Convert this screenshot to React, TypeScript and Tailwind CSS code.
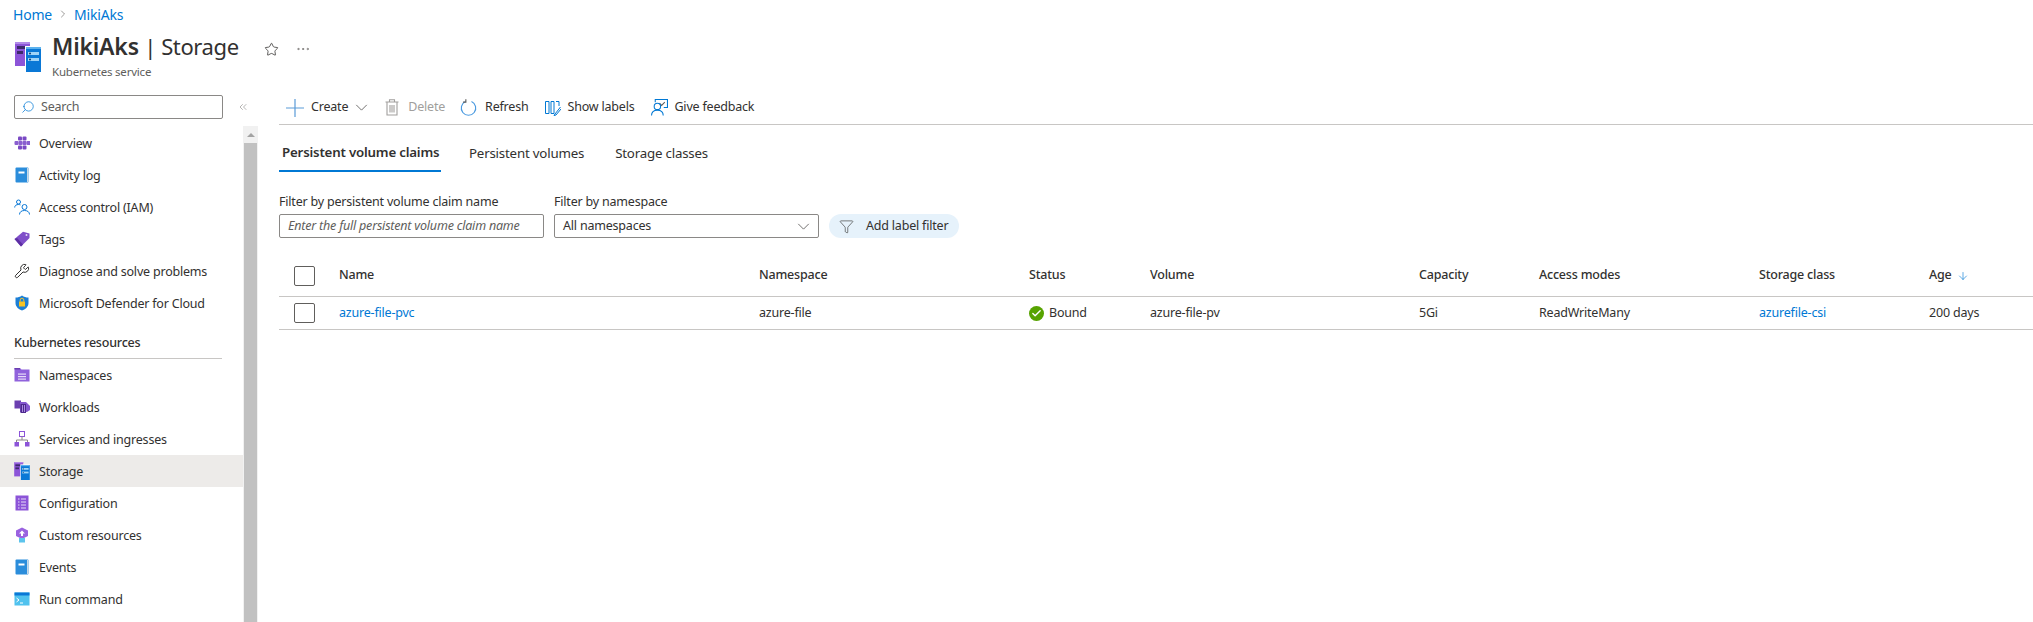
import { Search, Star, ChevronRight, ChevronsLeft, Filter, Ellipsis, ArrowDown, Wrench, Check } from 'lucide-react';

function ClusterIcon({ className }: { className: string }) {
  return (
    <svg viewBox="0 0 26 30" className={className} aria-hidden="true">
      <rect x="0" y="0" width="15" height="24" fill="#8c54d8" />
      <rect x="0" y="0" width="15" height="2" fill="#b28ae8" />
      <rect x="2" y="4" width="9" height="3" fill="#3d2a6b" />
      <rect x="2" y="9" width="6" height="3" fill="#3d2a6b" />
      <rect x="10" y="4" width="16" height="26" fill="#ffffff" />
      <rect x="11" y="5" width="15" height="25" fill="#0a78d6" />
      <rect x="11" y="5" width="15" height="2" fill="#5cb2ee" />
      <rect x="13" y="10" width="11" height="3" fill="#9fd4f7" />
      <rect x="13" y="16" width="11" height="3" fill="#9fd4f7" />
      <circle cx="15" cy="11.5" r="1" fill="#0f3d73" />
      <circle cx="15" cy="17.5" r="1" fill="#0f3d73" />
    </svg>
  );
}

function OverviewIcon() {
  return (
    <svg viewBox="0 0 16 16" className="w-4 h-4" aria-hidden="true">
      {[[4, 1.500], [8.500, 1.500], [0.500, 6], [4.500, 6], [8.500, 6], [12.500, 6], [4, 10.500], [8.500, 10.500]].map(([x, y]) => (
        <rect key={`${x}-${y}`} x={x} y={y} width="4" height="4" rx="1" fill={y === 6 ? '#8a5ecf' : '#7a49c4'} />
      ))}
    </svg>
  );
}

function BookIcon() {
  return (
    <svg viewBox="0 0 16 16" className="w-4 h-4" aria-hidden="true">
      <rect x="1.500" y="0.500" width="13" height="15" rx="1" fill="#2b8ddb" />
      <rect x="13" y="1" width="1.500" height="14" fill="#c8d8e6" />
      <rect x="4.500" y="4.500" width="6" height="2" fill="#ffffff" />
    </svg>
  );
}

function PeopleIcon() {
  return (
    <svg viewBox="0 0 16 16" className="w-4 h-4" fill="none" stroke="#0a78d6" strokeWidth="1" aria-hidden="true">
      <circle cx="4.500" cy="3" r="2" />
      <path d="M0.700 8.500c0-2 1.600-3 3.800-3 0.800 0 1.500 0.200 2 0.400" />
      <circle cx="10.500" cy="8" r="2.500" />
      <path d="M5.500 15.500c0-2.500 2-4 5-4s5 1.500 5 4" />
    </svg>
  );
}

function TagIcon() {
  return (
    <svg viewBox="0 0 16 16" className="w-4 h-4" aria-hidden="true">
      <path d="M0.500 8 L9 0.800 L15.500 2.500 L15.500 7 L7 15.500 Z" fill="#7f4fc9" />
      <path d="M0.500 8 L7 15.500 L9 13.500 L3 7 Z" fill="#5d2fa3" />
      <circle cx="12.500" cy="4" r="1" fill="#e6dcf7" />
    </svg>
  );
}

function ShieldIcon() {
  return (
    <svg viewBox="0 0 16 16" className="w-4 h-4" aria-hidden="true">
      <path d="M8 0.500 C10 2 12 2.500 14.500 2.500 L14.500 8 C14.500 12 11 14.500 8 15.500 C5 14.500 1.500 12 1.500 8 L1.500 2.500 C4 2.500 6 2 8 0.500 Z" fill="#1c7fd6" />
      <rect x="5" y="6.500" width="6" height="5" fill="#f7c325" />
      <path d="M6.200 6.500 V5 a1.800 1.800 0 0 1 3.600 0 V6.500" fill="none" stroke="#f7c325" strokeWidth="1" />
    </svg>
  );
}

function FolderIcon() {
  return (
    <svg viewBox="0 0 16 16" className="w-4 h-4" aria-hidden="true">
      <path d="M0.500 1 H6 L7.500 2.500 H15.500 V14.500 H0.500 Z" fill="#9062dc" />
      <rect x="0.500" y="1" width="5.500" height="1.500" fill="#6b3fb0" />
      <rect x="4" y="6.500" width="8" height="1.200" fill="#e6dcf7" />
      <rect x="4" y="9" width="8" height="1.200" fill="#e6dcf7" />
      <rect x="4" y="11.500" width="8" height="1.200" fill="#e6dcf7" />
    </svg>
  );
}

function WorkloadsIcon() {
  return (
    <svg viewBox="0 0 16 16" className="w-4 h-4" aria-hidden="true">
      <rect x="0.500" y="1.500" width="6.500" height="8" fill="#6b3fb0" />
      <path d="M6 3 H12 L16 7 V11 L13 13 H6 Z" fill="#8457cf" />
      <rect x="6.500" y="5" width="5.500" height="9" fill="#4e2a8e" />
      <rect x="8" y="6" width="1" height="7" fill="#a98be0" />
      <rect x="10" y="6" width="1" height="7" fill="#a98be0" />
    </svg>
  );
}

function ServicesIcon() {
  return (
    <svg viewBox="0 0 16 16" className="w-4 h-4" aria-hidden="true">
      <rect x="5.500" y="0.500" width="5" height="5" fill="#ffffff" stroke="#8c54d8" />
      <path d="M8 5.500 V9 M2.500 11.500 V9 H13.500 V11.500" fill="none" stroke="#8a8886" />
      <rect x="0.500" y="11" width="4.500" height="4.500" fill="#8c54d8" />
      <rect x="11" y="11" width="4.500" height="4.500" fill="#8c54d8" />
    </svg>
  );
}

function ConfigIcon() {
  return (
    <svg viewBox="0 0 16 16" className="w-4 h-4" aria-hidden="true">
      <rect x="1.500" y="0.500" width="13" height="15" fill="#8c54d8" />
      <path d="M4 4 H5.500 M7 4 H12 M4 7 H5.500 M7 7 H12 M4 10 H5.500 M7 10 H12 M4 13 H5.500 M7 13 H12" stroke="#e6dcf7" />
    </svg>
  );
}

function CustomIcon() {
  return (
    <svg viewBox="0 0 16 16" className="w-4 h-4" aria-hidden="true">
      <path d="M8 0.500 L14 3.500 V9 L8 12 L2 9 V3.500 Z" fill="#9a62e0" />
      <rect x="5" y="11" width="6" height="4.500" fill="#5cc4ec" />
      <path d="M8 3.500 L11 6.500 H9 V9 H7 V6.500 H5 Z" fill="#ffffff" />
    </svg>
  );
}

function TerminalIcon() {
  return (
    <svg viewBox="0 0 16 16" className="w-4 h-4" aria-hidden="true">
      <rect x="0.500" y="1.500" width="15" height="13" fill="#50c2ee" />
      <rect x="0.500" y="1.500" width="15" height="3" fill="#0a78d6" />
      <path d="M2.500 7 L5 9 L2.500 11 M6 12 H9" fill="none" stroke="#ffffff" />
    </svg>
  );
}

function Chevron({ className }: { className: string }) {
  return (
    <svg viewBox="0 0 14 8" className={className} fill="none" stroke="#605e5c" strokeWidth="1" aria-hidden="true">
      <path d="M1 1 L7 7 L13 1" />
    </svg>
  );
}

const topItems = [
  { label: 'Overview', icon: <OverviewIcon /> },
  { label: 'Activity log', icon: <BookIcon /> },
  { label: 'Access control (IAM)', icon: <PeopleIcon /> },
  { label: 'Tags', icon: <TagIcon /> },
  { label: 'Diagnose and solve problems', icon: <Wrench className="w-4 h-4 text-[#323130]" strokeWidth={1.5} /> },
  { label: 'Microsoft Defender for Cloud', icon: <ShieldIcon /> },
];

const k8sItems = [
  { label: 'Namespaces', icon: <FolderIcon /> },
  { label: 'Workloads', icon: <WorkloadsIcon /> },
  { label: 'Services and ingresses', icon: <ServicesIcon /> },
  { label: 'Storage', icon: <ClusterIcon className="w-4 h-[18px]" />, active: true },
  { label: 'Configuration', icon: <ConfigIcon /> },
  { label: 'Custom resources', icon: <CustomIcon /> },
  { label: 'Events', icon: <BookIcon /> },
  { label: 'Run command', icon: <TerminalIcon /> },
];

function NavItem({ label, icon, active }: { label: string; icon: React.ReactNode; active?: boolean }) {
  return (
    <div className={`h-8 flex items-center pl-[14px] gap-[9px] ${active ? 'bg-[#edebe9]' : ''}`}>
      {icon}
      <span className="pt-[3px]">{label}</span>
    </div>
  );
}

function Checkbox() {
  return <div className="w-[21px] h-[20px] border border-[#605e5c] rounded-[2px]" />;
}

const gridCols = 'grid grid-cols-[60px_420px_270px_121px_269px_120px_220px_170px_1fr] items-center';

export default function App() {
  return (
    <div className="h-[622px] flex flex-col overflow-hidden bg-white text-[#323130] text-[12.5px] tracking-[-0.2px] font-['Noto_Sans',sans-serif]">
      <div className="h-[28px] pl-[13px] flex items-center gap-[5px] text-[14px] text-[#0078d4]">
        <span>Home</span>
        <ChevronRight className="w-3 h-3 text-[#605e5c]" strokeWidth={1.25} />
        <span>MikiAks</span>
      </div>

      <div className="h-[60px] pl-[15px] flex items-center">
        <ClusterIcon className="w-[26px] h-[30px] mt-[-2px]" />
        <div className="ml-[11px] -mt-[5px]">
          <div className="leading-[29px]">
            <span className="text-[23px] font-semibold tracking-[-0.2px]">MikiAks</span>
            <span className="text-[22px] tracking-[-0.4px]"> | Storage</span>
          </div>
          <div className="text-[11.5px] leading-[14px] text-[#605e5c]">Kubernetes service</div>
        </div>
        <Star className="w-[15px] h-[15px] ml-[25px] mb-[18px]" strokeWidth={1.25} />
        <Ellipsis className="w-4 h-4 ml-[16px] mb-[18px] text-[#605e5c]" strokeWidth={1} />
      </div>

      <div className="flex flex-1 min-h-0">
        <aside className="w-[258px] flex flex-col shrink-0">
          <div className="h-[38px] shrink-0 flex items-center pl-[14px]">
            <div className="w-[209px] shrink-0 h-[24px] border border-[#8a8886] rounded-[2px] flex items-center pl-[6px] gap-[6px] text-[#605e5c]">
              <Search className="w-[14px] h-[14px] -scale-x-100 text-[#0078d4]" strokeWidth={1.25} />
              <span className="pt-[1px]">Search</span>
            </div>
            <ChevronsLeft className="w-3 h-3 ml-[14px] text-[#8a8886]" strokeWidth={1.25} />
          </div>
          <div className="flex flex-1 min-h-0">
            <div className="w-[243px] shrink-0">
              <div className="pt-[1px]">
                {topItems.map((item) => (
                  <NavItem key={item.label} {...item} />
                ))}
              </div>
              <div className="ml-[14px] w-[208px] mt-[8px] h-[32px] leading-[32px] font-medium border-b border-[#c8c6c4]">
                Kubernetes resources
              </div>
              <div>
                {k8sItems.map((item) => (
                  <NavItem key={item.label} {...item} />
                ))}
              </div>
            </div>
            <div className="w-[15px] bg-[#f1f1f1] flex flex-col items-center">
              <div className="h-[17px] shrink-0 flex items-center justify-center">
                <div className="w-0 h-0 border-x-[4px] border-x-transparent border-b-[4px] border-b-[#a3a3a3]" />
              </div>
              <div className="w-[13px] flex-1 bg-[#c1c1c1]" />
            </div>
          </div>
        </aside>

        <main className="flex-1 pl-[21px]">
          <div className="h-[37px] flex items-center border-b border-[#c8c6c4] pl-[7px] pt-[3px]">
            <svg viewBox="0 0 18 18" className="w-[18px] h-[18px]" fill="none" stroke="#5a9bd8" strokeWidth="1.2" aria-hidden="true">
              <path d="M0 9 H18 M9 0 V18" />
            </svg>
            <span className="ml-[7px]">Create</span>
            <Chevron className="w-[13px] h-[7px] ml-[7px]" />
            <svg viewBox="0 0 14 17" className="w-[14px] h-[17px] ml-[17px]" fill="none" stroke="#a19f9d" strokeWidth="1.1" aria-hidden="true">
              <path d="M0.500 3 H13.500 M4.500 3 V0.800 H9.500 V3 M2 3 V16 H12 V3" />
              <path d="M5 6 V13.500 M7 6 V13.500 M9 6 V13.500" />
            </svg>
            <span className="ml-[9px] text-[#a19f9d]">Delete</span>
            <svg viewBox="0 0 16 16" className="w-[17px] h-[17px] ml-[15px]" fill="none" stroke="#4a9ae0" strokeWidth="1.1" aria-hidden="true">
              <path d="M5.200 2.300 A6.800 6.800 0 1 0 10.800 2.300" />
              <path d="M5.500 0.300 V3 H2.800" stroke="#605e5c" />
            </svg>
            <span className="ml-[8px]">Refresh</span>
            <svg viewBox="0 0 16 16" className="w-[16px] h-[16px] ml-[17px]" fill="none" stroke="#0078d4" strokeWidth="1" aria-hidden="true">
              <path d="M0.500 1.500 H4 V13.500 H0.500 Z M6 1.500 H9 V13.500 H6 Z M11 1.500 H14 V6" />
              <path d="M15.500 7 L10 14 L9 15.500 L11 15 L16 9" />
            </svg>
            <span className="ml-[6px]">Show labels</span>
            <svg viewBox="0 0 16 16" className="w-[17px] h-[17px] ml-[17px]" fill="none" stroke="#0078d4" strokeWidth="1" aria-hidden="true">
              <path d="M4 3 V0.500 H15.500 V8 H12" />
              <path d="M8 4 L10 6 L13 3" stroke="#605e5c" />
              <circle cx="6" cy="7" r="3" />
              <path d="M0.500 15.500 c0-3 2-5 5.500-5 s5.500 2 5.500 5" />
            </svg>
            <span className="ml-[6px]">Give feedback</span>
          </div>

          <div className="h-[47px] flex items-end text-[13.3px]">
            <div className="h-[37px] w-[162px] pl-[3px] flex items-center font-semibold border-b-[2px] border-[#0078d4] whitespace-nowrap">
              Persistent volume claims
            </div>
            <div className="h-[37px] ml-[28px] flex items-center">Persistent volumes</div>
            <div className="h-[37px] ml-[31px] flex items-center">Storage classes</div>
          </div>

          <div className="mt-[21px] flex items-end">
            <div className="w-[265px] shrink-0">
              <div className="leading-[18px] mb-[3px]">Filter by persistent volume claim name</div>
              <div className="h-[24px] border border-[#8a8886] rounded-[2px] flex items-center pl-[8px] italic text-[#605e5c] whitespace-nowrap overflow-hidden">
                Enter the full persistent volume claim name
              </div>
            </div>
            <div className="w-[265px] shrink-0 ml-[10px]">
              <div className="leading-[18px] mb-[3px]">Filter by namespace</div>
              <div className="h-[24px] border border-[#8a8886] rounded-[2px] flex items-center justify-between px-[8px]">
                All namespaces
                <Chevron className="w-[13px] h-[7px]" />
              </div>
            </div>
            <div className="ml-[10px] h-[24px] w-[130px] rounded-full bg-[#e6f2fb] flex items-center pl-[10px] gap-[12px]">
              <Filter className="w-[15px] h-[15px]" strokeWidth={1} />
              Add label filter
            </div>
          </div>

          <div className="mt-[17px]">
            <div className={`${gridCols} h-[42px] font-medium border-b border-[#c8c6c4]`}>
              <div className="pl-[15px]"><Checkbox /></div>
              <div>Name</div>
              <div>Namespace</div>
              <div>Status</div>
              <div>Volume</div>
              <div>Capacity</div>
              <div>Access modes</div>
              <div>Storage class</div>
              <div className="flex items-center gap-[5px]">
                Age <ArrowDown className="w-3 h-3 text-[#0078d4]" strokeWidth={1.25} />
              </div>
            </div>
            <div className={`${gridCols} h-[33px] border-b border-[#c8c6c4]`}>
              <div className="pl-[15px]"><Checkbox /></div>
              <div className="text-[#0078d4]">azure-file-pvc</div>
              <div>azure-file</div>
              <div className="flex items-center gap-[5px]">
                <span className="w-[15px] h-[15px] rounded-full bg-[#57a300] flex items-center justify-center">
                  <Check className="w-[11px] h-[11px] text-white" strokeWidth={3} />
                </span>
                Bound
              </div>
              <div>azure-file-pv</div>
              <div>5Gi</div>
              <div>ReadWriteMany</div>
              <div className="text-[#0078d4]">azurefile-csi</div>
              <div>200 days</div>
            </div>
          </div>
        </main>
      </div>
    </div>
  );
}
